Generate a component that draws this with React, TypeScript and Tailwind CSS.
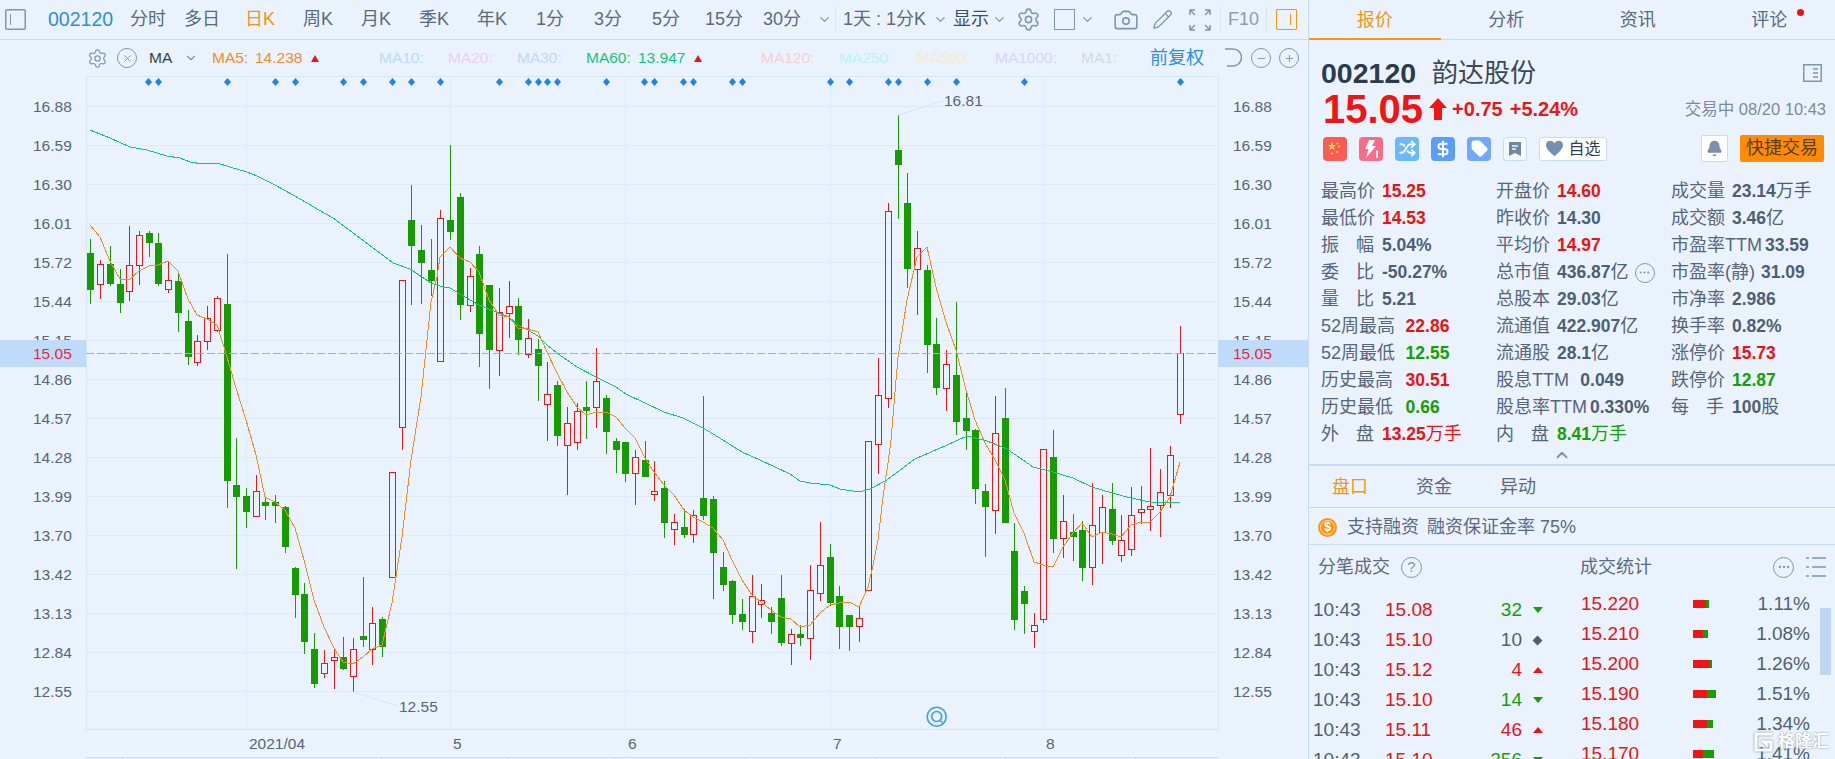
import { Bell, Camera, ChevronDown, ChevronUp, DollarSign, Ellipsis, Minus, Pencil, Plus, Settings, Shuffle, Tag, X } from "lucide-react";

const CODE_BLUE = "text-[#2a8cf0]";

// [x, high, bodyTop, bodyBottom, low, up?1:0]
const candles: number[][] = [
  [90, 239, 253, 290, 304, 0], [100, 260, 264, 284, 299, 1], [110, 246, 264, 284, 286, 0], [120, 269, 284, 303, 313, 0],
  [129, 226, 265, 291, 301, 1], [139, 231, 235, 265, 285, 1], [149, 231, 233, 243, 257, 0], [158, 233, 243, 284, 286, 0],
  [168, 261, 280, 289, 293, 1], [178, 272, 281, 313, 332, 0], [188, 310, 321, 357, 365, 0], [197, 335, 341, 362, 366, 1],
  [207, 306, 318, 341, 350, 1], [217, 296, 298, 330, 332, 1], [227, 254, 304, 481, 508, 0], [236, 438, 485, 497, 569, 0],
  [246, 488, 496, 512, 528, 0], [256, 475, 491, 516, 516, 1], [265, 497, 502, 506, 520, 0], [275, 495, 502, 506, 523, 0],
  [285, 506, 507, 547, 553, 0], [295, 567, 568, 595, 618, 0], [304, 583, 594, 642, 654, 0], [314, 633, 649, 684, 688, 0],
  [324, 650, 663, 673, 678, 1], [334, 648, 657, 660, 689, 1], [343, 637, 657, 669, 670, 0], [353, 638, 649, 676, 692, 1],
  [363, 577, 636, 640, 647, 0], [372, 607, 623, 649, 665, 1], [382, 617, 619, 647, 657, 0], [392, 472, 472, 577, 577, 1],
  [402, 280, 280, 427, 450, 1], [411, 185, 220, 246, 305, 0], [421, 225, 250, 263, 304, 0], [431, 239, 270, 281, 296, 0],
  [440, 210, 218, 361, 362, 1], [450, 145, 220, 232, 240, 0], [460, 193, 197, 305, 320, 0], [470, 268, 276, 305, 312, 1],
  [479, 246, 254, 334, 367, 0], [489, 285, 285, 350, 389, 0], [499, 288, 312, 350, 376, 1], [509, 281, 306, 313, 338, 1],
  [518, 298, 306, 340, 355, 0], [528, 319, 338, 354, 358, 1], [538, 339, 349, 366, 401, 0], [547, 362, 394, 404, 441, 1],
  [557, 381, 385, 436, 446, 0], [567, 407, 423, 445, 495, 1], [577, 403, 411, 442, 450, 1], [586, 381, 407, 411, 439, 0],
  [596, 348, 381, 407, 428, 1], [606, 395, 398, 432, 454, 0], [616, 438, 441, 450, 473, 0], [625, 442, 442, 474, 482, 0],
  [635, 450, 457, 473, 505, 1], [645, 441, 460, 477, 477, 0], [654, 461, 491, 494, 501, 1], [664, 481, 488, 523, 538, 0],
  [674, 514, 522, 529, 545, 1], [684, 509, 527, 535, 538, 0], [693, 510, 515, 534, 543, 1], [703, 396, 498, 516, 520, 0],
  [713, 496, 499, 553, 599, 0], [723, 552, 567, 585, 591, 0], [732, 580, 581, 615, 624, 0], [742, 599, 614, 622, 630, 0],
  [752, 575, 596, 631, 643, 1], [761, 584, 600, 604, 618, 1], [771, 607, 613, 622, 634, 0], [781, 575, 598, 643, 646, 0],
  [791, 629, 634, 643, 665, 1], [800, 625, 634, 638, 646, 0], [810, 565, 590, 638, 660, 1], [820, 522, 565, 593, 601, 1],
  [830, 544, 557, 603, 606, 0], [839, 586, 596, 627, 649, 0], [849, 615, 615, 627, 651, 0], [859, 607, 618, 626, 642, 1],
  [868, 441, 441, 590, 590, 1], [878, 358, 395, 444, 474, 1], [888, 203, 211, 398, 408, 1], [898, 115, 150, 165, 219, 0],
  [907, 173, 203, 269, 288, 0], [917, 231, 248, 269, 315, 1], [927, 265, 270, 345, 373, 0], [936, 318, 344, 388, 395, 0],
  [946, 350, 364, 388, 411, 1], [956, 302, 375, 422, 435, 0], [966, 391, 418, 431, 450, 0], [975, 429, 430, 489, 504, 0],
  [985, 484, 491, 507, 557, 0], [995, 396, 433, 510, 534, 1], [1005, 388, 418, 523, 523, 0], [1014, 523, 551, 620, 630, 0],
  [1024, 586, 591, 604, 634, 0], [1034, 613, 625, 631, 648, 1], [1043, 449, 449, 619, 623, 1], [1053, 430, 457, 539, 553, 0],
  [1063, 495, 521, 538, 558, 1], [1073, 514, 532, 537, 561, 0], [1082, 521, 530, 568, 581, 0], [1092, 483, 525, 567, 585, 1],
  [1102, 495, 507, 532, 564, 1], [1112, 483, 509, 541, 545, 0], [1121, 515, 540, 555, 562, 1], [1131, 487, 515, 549, 556, 1],
  [1141, 486, 509, 512, 524, 1], [1150, 448, 506, 509, 531, 1], [1160, 469, 492, 505, 537, 1], [1170, 446, 455, 495, 508, 1],
  [1180, 326, 353, 414, 424, 1],
];

const ma5 =
  "90,225 100,237 110,261 120,279 129,280 139,271 149,266 158,265 168,261 178,271 188,299 197,315 207,319 217,325 227,357 236,388 246,420 256,455 265,497 275,502 285,510 295,528 304,560 314,600 324,627 334,648 343,662 353,664 363,657 372,649 382,645 392,603 402,537 411,460 421,397 431,302 437,277 440,257 450,247 460,258 470,262 479,272 489,300 499,315 509,317 518,328 528,329 538,332 547,352 557,373 567,392 577,407 586,415 596,412 606,412 616,417 625,428 635,438 645,458 654,472 664,485 674,495 684,510 693,517 703,522 713,528 723,540 732,560 742,580 752,595 761,602 771,610 781,617 791,619 800,627 810,625 820,613 830,605 839,603 849,602 859,607 868,587 872,570 878,540 883,497 888,463 891,440 898,357 907,300 917,257 927,247 936,287 946,322 956,350 966,390 975,420 985,443 995,460 1005,480 1014,513 1024,533 1034,562 1043,565 1053,567 1063,547 1073,533 1082,523 1092,537 1102,532 1112,534 1121,537 1131,525 1141,522 1150,522 1160,512 1170,497 1180,462";
const ma60 =
  "90,130 110,138 130,147 147,150 167,156 180,158 190,162 203,164 217,163 230,167 247,172 257,176 275,185 293,195 333,218 360,238 393,263 410,269 431,283 443,287 450,288 460,294 479,305 499,313 509,317 518,325 528,330 538,336 547,345 557,353 577,367 596,377 616,387 626,394 645,403 664,412 683,418 703,428 723,440 742,452 760,460 790,474 800,481 810,483 830,485 840,489 859,492 870,489 887,480 915,459 947,445 967,436 987,441 1007,449 1033,467 1053,472 1073,478 1092,487 1112,493 1131,498 1150,502 1170,503 1180,502";

const axis = ["16.88", "16.59", "16.30", "16.01", "15.72", "15.44", "15.15", "14.86", "14.57", "14.28", "13.99", "13.70", "13.42", "13.13", "12.84", "12.55"];
const vLines = [246, 450, 625, 830, 1043];
const signals = [148, 158, 227, 275, 295, 343, 363, 392, 411, 440, 499, 528, 538, 547, 557, 606, 644, 654, 683, 693, 732, 742, 830, 849, 888, 898, 927, 956, 1024, 1180];
const bottomTicks = [122, 381, 508, 614, 745, 875, 1005, 1135];

type Stat = { label: string; value?: string; unit?: string; tone?: string; labelW?: number; spread?: boolean; more?: boolean };
const RED = "text-[#f01010]";
const GREEN = "text-[#14a000]";
const SLATE = "text-[#4e5e76]";

const stats: Stat[][] = [
  [
    { label: "最高价", value: "15.25", tone: RED },
    { label: "最低价", value: "14.53", tone: RED },
    { label: "振幅", value: "5.04%", spread: true },
    { label: "委比", value: "-50.27%", spread: true },
    { label: "量比", value: "5.21", spread: true },
    { label: "52周最高", value: "22.86", tone: RED, labelW: 84.6 },
    { label: "52周最低", value: "12.55", tone: GREEN, labelW: 84.6 },
    { label: "历史最高", value: "30.51", tone: RED, labelW: 84.6 },
    { label: "历史最低", value: "0.66", tone: GREEN, labelW: 84.6 },
    { label: "外盘", value: "13.25", unit: "万手", tone: RED, spread: true },
  ],
  [
    { label: "开盘价", value: "14.60", tone: RED },
    { label: "昨收价", value: "14.30" },
    { label: "平均价", value: "14.97", tone: RED },
    { label: "总市值", value: "436.87", unit: "亿", more: true },
    { label: "总股本", value: "29.03", unit: "亿" },
    { label: "流通值", value: "422.907", unit: "亿" },
    { label: "流通股", value: "28.1", unit: "亿" },
    { label: "股息TTM", value: "0.049", labelW: 84.3 },
    { label: "股息率TTM", value: "0.330%", labelW: 94 },
    { label: "内盘", value: "8.41", unit: "万手", tone: GREEN, spread: true },
  ],
  [
    { label: "成交量", value: "23.14", unit: "万手" },
    { label: "成交额", value: "3.46", unit: "亿" },
    { label: "市盈率TTM", value: "33.59", labelW: 94 },
    { label: "市盈率(静)", value: "31.09", labelW: 90 },
    { label: "市净率", value: "2.986" },
    { label: "换手率", value: "0.82%" },
    { label: "涨停价", value: "15.73", tone: RED },
    { label: "跌停价", value: "12.87", tone: GREEN },
    { label: "每手", value: "100", unit: "股", spread: true },
  ],
];

const ticks = [
  ["15.08", "32", "down"],
  ["15.10", "10", "flat"],
  ["15.12", "4", "up"],
  ["15.10", "14", "down"],
  ["15.11", "46", "up"],
  ["15.10", "256", "down"],
];

const levels: [string, number, number, string][] = [
  ["15.220", 13, 3, "1.11%"],
  ["15.210", 10, 5, "1.08%"],
  ["15.200", 17, 1.5, "1.26%"],
  ["15.190", 14, 9, "1.51%"],
  ["15.180", 14, 6, "1.34%"],
  ["15.170", 10, 11, "1.41%"],
];

function Chart() {
  return (
    <svg width={1308} height={683} viewBox="0 76 1308 683" className="block shrink-0">
      <rect x={0} y={340} width={86} height={27} fill="#bfdbfb" />
      <g stroke="#dcebfb" strokeWidth={1} shapeRendering="crispEdges">
        {axis.map((a, i) => (
          <line key={a} x1={86} x2={1218} y1={106.5 + 39 * i} y2={106.5 + 39 * i} />
        ))}
        {vLines.map((x) => (
          <line key={x} x1={x + 0.5} x2={x + 0.5} y1={76} y2={729} />
        ))}
        <rect x={86.5} y={76.5} width={1132} height={653} fill="none" stroke="#d6e7fa" />
      </g>
      <g stroke="#c6dcf5" shapeRendering="crispEdges">
        <line x1={86} x2={1218} y1={757.5} y2={757.5} />
        {bottomTicks.map((x) => (
          <line key={x} x1={x + 0.5} x2={x + 0.5} y1={757} y2={759} />
        ))}
      </g>

      {/* axis labels, the 15.15 row sits under the price band */}
      <g fontSize={15.5} fill="#55657c" dominantBaseline="central">
        {axis.map((a, i) => (
          <text key={a} x={33} y={106.5 + 39 * i}>{a}</text>
        ))}
        {axis.map((a, i) => (
          <text key={a} x={1233} y={106.5 + 39 * i}>{a}</text>
        ))}
      </g>
      <rect x={0} y={340} width={86} height={27} fill="#bfdbfb" />
      <rect x={1218} y={340} width={90} height={27} fill="#bfdbfb" />
      <g fontSize={15.5} fill="#f01f3f" dominantBaseline="central">
        <text x={33} y={353.5}>15.05</text>
        <text x={1233} y={353.5}>15.05</text>
      </g>

      <g fill="#1c84f0">
        {signals.map((x) => (
          <polygon key={x} points={`${x},78 ${x + 3.5},82 ${x},86 ${x - 3.5},82`} transform="translate(0.5 0)" />
        ))}
      </g>

      <g shapeRendering="crispEdges">
        {candles.map(([x, h, t, b, l, up]) =>
          up ? (
            <g key={x} stroke="#f01414" fill="none">
              <line x1={x + 0.5} x2={x + 0.5} y1={h} y2={t} />
              <line x1={x + 0.5} x2={x + 0.5} y1={b} y2={l} />
              <rect x={x - 2.5} y={t + 0.5} width={6} height={Math.max(b - t, 2)} />
            </g>
          ) : (
            <g key={x}>
              <line x1={x + 0.5} x2={x + 0.5} y1={h} y2={l} stroke="#169c00" />
              <rect x={x - 3} y={t} width={7} height={b - t} fill="#169c00" />
            </g>
          ),
        )}
      </g>

      <line x1={86} x2={1218} y1={353.5} y2={353.5} stroke="#f0a040" strokeDasharray="8 3" />
      <polyline points={ma60} fill="none" stroke="#14c47c" strokeWidth={1} shapeRendering="crispEdges" />
      <polyline points={ma5} fill="none" stroke="#fb8a1e" strokeWidth={1} shapeRendering="crispEdges" />

      <line x1={898} y1={115} x2={943} y2={101} stroke="#d5e5f5" />
      <line x1={353} y1={692} x2={398} y2={706} stroke="#d5e5f5" />
      <g fontSize={15.5} fill="#55657c" dominantBaseline="central">
        <text x={944} y={100.5}>16.81</text>
        <text x={399} y={706.5}>12.55</text>
        <text x={249} y={743}>2021/04</text>
        <text x={453} y={743}>5</text>
        <text x={628} y={743}>6</text>
        <text x={833} y={743}>7</text>
        <text x={1046} y={743}>8</text>
      </g>

      <g fill="none" stroke="#3b9bf5" strokeWidth={1.6}>
        <circle cx={936.7} cy={716.7} r={9.5} />
        <circle cx={936.7} cy={716.5} r={5} />
        <path d="M939.5 720l3 2.5" />
      </g>
    </svg>
  );
}

function Toolbar() {
  const periods = ["日K", "周K", "月K", "季K", "年K", "1分", "3分", "5分", "15分", "30分"];
  return (
    <div className="flex h-[40px] items-center border-b border-[#c6dcf5] pl-[5px] text-[18px] text-[#5a697f]">
      <svg width={21} height={21} viewBox="0 0 21 21" className="shrink-0">
        <rect x={0.75} y={0.75} width={19.5} height={19.5} rx={1} fill="none" stroke="#7c96b4" strokeWidth={1.5} />
        <line x1={5.5} x2={5.5} y1={5} y2={16} stroke="#7c96b4" />
      </svg>
      <span className={`ml-[22px] w-[66px] text-[19.5px] ${CODE_BLUE}`}>002120</span>
      <span className="ml-[16px] w-[36px]">分时</span>
      <span className="ml-[18px] w-[36px]">多日</span>
      <div className="ml-[11px] flex">
        {periods.map((p, i) => (
          <span key={p} className={`w-[58px] text-center ${i === 0 ? "text-[#f9900f]" : ""}`}>{p}</span>
        ))}
      </div>
      <ChevronDown size={15} className="ml-[6px] text-[#7c96b4]" />
      <div className="ml-[3px] h-[26px] w-px bg-[#d6e7fa]" />
      <span className="ml-[7px] w-[84px] whitespace-nowrap">1天 : 1分K</span>
      <ChevronDown size={15} className="ml-[6px] text-[#7c96b4]" />
      <span className="ml-[5px] w-[38px] text-[#3f4d62]">显示</span>
      <ChevronDown size={15} className="ml-[1px] text-[#7c96b4]" />
      <Settings size={25} strokeWidth={1.5} className="ml-[9px] text-[#7c96b4]" />
      <div className="ml-[13px] h-[21px] w-[21px] border-[1.5px] border-[#7c96b4]" />
      <ChevronDown size={15} className="ml-[5px] text-[#7c96b4]" />
      <Camera size={26} strokeWidth={1.5} className="ml-[18px] text-[#7c96b4]" />
      <Pencil size={21} strokeWidth={1.5} className="ml-[13px] text-[#7c96b4]" />
      <svg width={22} height={22} viewBox="0 0 22 22" fill="none" stroke="#7c96b4" strokeWidth={1.5} className="ml-[16px] shrink-0">
        <path d="M1 6V1h5M16 1h5v5M21 16v5h-5M6 21H1v-5M2 2l4 4M20 2l-4 4M20 20l-4-4M2 20l4-4" />
      </svg>
      <div className="ml-[9px] h-[26px] w-px bg-[#d6e7fa]" />
      <span className="ml-[7px] w-[32px] text-[18px] text-[#8a9db5]">F10</span>
      <div className="ml-[6px] h-[26px] w-px bg-[#d6e7fa]" />
      <div className="ml-[9px] flex h-[21px] w-[21px] items-center justify-end rounded-[1px] border-[1.5px] border-[#f9940f] pr-[5px]">
        <div className="h-[11px] w-[1.5px] bg-[#f9940f]" />
      </div>
    </div>
  );
}

function MaRow() {
  return (
    <div className="flex h-[36px] items-center whitespace-nowrap pl-[87px] text-[15.5px]">
      <Settings size={21} strokeWidth={1.4} className="shrink-0 text-[#7c96b4]" />
      <span className="ml-[9px] flex h-[20px] w-[20px] shrink-0 items-center justify-center rounded-full border-[1.5px] border-[#7c96b4]">
        <X size={11} className="text-[#7c96b4]" />
      </span>
      <span className="ml-[12px] w-[24px] text-[#333f50]">MA</span>
      <ChevronDown size={14} className="ml-[11px] shrink-0 text-[#7c96b4]" />
      <span className="ml-[14px] w-[36px] text-[#fb8a1e]">MA5:</span>
      <span className="ml-[7px] w-[48px] text-[#fb8a1e]">14.238</span>
      <span className="ml-[8px] h-0 w-0 border-x-[4.5px] border-b-[7px] border-x-transparent border-b-[#f01010]" />
      <span className="ml-[60px] w-[46px] text-[#b5dcf7]">MA10:</span>
      <span className="ml-[23px] w-[46px] text-[#eecdee]">MA20:</span>
      <span className="ml-[23px] w-[46px] text-[#bcd8fb]">MA30:</span>
      <span className="ml-[23px] w-[46px] text-[#10c878]">MA60:</span>
      <span className="ml-[6px] w-[48px] text-[#10c878]">13.947</span>
      <span className="ml-[8px] h-0 w-0 border-x-[4.5px] border-b-[7px] border-x-transparent border-b-[#f01010]" />
      <span className="ml-[59px] w-[55px] text-[#f6cfd5]">MA120:</span>
      <span className="ml-[23px] w-[55px] text-[#b5f5fb]">MA250:</span>
      <span className="ml-[23px] w-[55px] text-[#f8ecc8]">MA500:</span>
      <span className="ml-[23px] w-[63px] text-[#dcd2fb]">MA1000:</span>
      <span className="ml-[23px] w-[36px] text-[#d3dae0]">MA1:</span>
      <span className={`ml-[33px] w-[54px] text-[18px] ${CODE_BLUE}`}>前复权</span>
      <svg width={18} height={20} viewBox="0 0 18 20" fill="none" stroke="#7c96b4" strokeWidth={1.5} className="ml-[20px] shrink-0">
        <path d="M1 1h8a8 8 0 0 1 0 17H3" />
      </svg>
      <span className="ml-[9px] flex h-[20px] w-[20px] shrink-0 items-center justify-center rounded-full border-[1.5px] border-[#7c96b4]">
        <Minus size={11} className="text-[#7c96b4]" />
      </span>
      <span className="ml-[8px] flex h-[20px] w-[20px] shrink-0 items-center justify-center rounded-full border-[1.5px] border-[#7c96b4]">
        <Plus size={11} className="text-[#7c96b4]" />
      </span>
    </div>
  );
}

function StatRow({ s }: { s: Stat }) {
  const tone = s.tone ?? SLATE;
  return (
    <div className="flex h-[27px] items-center whitespace-nowrap">
      <div className="shrink-0 text-[#56657c]" style={{ width: s.labelW ?? 61 }}>
        {s.spread ? (
          <span className="flex w-[53px] justify-between">
            <span>{s.label[0]}</span>
            <span>{s.label[1]}</span>
          </span>
        ) : (
          s.label
        )}
      </div>
      <span className={`text-[17.5px] font-bold ${tone}`}>{s.value}</span>
      {s.unit && <span className={tone}>{s.unit}</span>}
      {s.more && (
        <span className="ml-[6px] flex h-[20px] w-[20px] items-center justify-center rounded-full border-[1.5px] border-[#7c96b4]">
          <Ellipsis size={13} className="text-[#7c96b4]" />
        </span>
      )}
    </div>
  );
}

function Badge({ bg, children }: { bg: string; children: React.ReactNode }) {
  return <span className={`flex h-[24px] w-[24px] shrink-0 items-center justify-center rounded-[4px] ${bg}`}>{children}</span>;
}

function QuotePanel() {
  return (
    <div className="relative h-[759px] flex-1 overflow-hidden border-l border-[#c6dcf5]">
      {/* tabs */}
      <div className="grid h-[40px] grid-cols-4 border-b border-[#c6dcf5] text-center text-[18px] leading-[40px] text-[#5a697f]">
        <div className="h-[40px] border-b-2 border-[#f9940f] text-[#f9940f]">报价</div>
        <div>分析</div>
        <div>资讯</div>
        <div>评论</div>
      </div>
      <div className="absolute left-[488px] top-[9px] h-[7px] w-[7px] rounded-full bg-[#f01010]" />

      {/* stock head */}
      <div className="pl-[12px] pr-[9px] pt-[16px]">
        <div className="flex h-[34px] items-center">
          <span className="text-[28.5px] font-bold text-[#2c3a4f]">002120</span>
          <span className="ml-[16px] text-[26px] text-[#3b4759]">韵达股份</span>
          <svg width={19} height={18} viewBox="0 0 19 18" fill="none" stroke="#7c96b4" strokeWidth={1.5} className="ml-auto mr-[4px] shrink-0">
            <rect x={0.75} y={0.75} width={17.5} height={16.5} />
            <path d="M10 5h5M10 9h5M10 13h5" />
          </svg>
        </div>
        <div className="mt-[1px] flex h-[36px] items-center text-[#f01414]">
          <span className="ml-[2px] text-[40px] font-bold leading-none">15.05</span>
          <svg width={18} height={22} viewBox="0 0 18 22" fill="#f01414" className="ml-[6px] shrink-0">
            <path d="M9 0l9 10h-5v12H5V10H0z" />
          </svg>
          <span className="ml-[5px] text-[20px] font-bold">+0.75</span>
          <span className="ml-[7px] text-[20px] font-bold">+5.24%</span>
          <span className="ml-auto text-[16.5px] text-[#7a8aa0]">交易中 08/20 10:43</span>
        </div>
        <div className="mt-[8px] flex h-[27px] items-center gap-[12px] pl-[2px]">
          <Badge bg="bg-[#f75c55]">
            <svg width={16} height={16} viewBox="0 0 16 16" fill="#ffd84a">
              <path d="M5 1l1.2 3H9L6.8 6l.9 3L5 7.2 2.3 9l.9-3L1 4h2.8z" />
              <circle cx={10.5} cy={2.5} r={1} />
              <circle cx={12} cy={5.5} r={1} />
              <circle cx={5} cy={12.5} r={1} />
              <circle cx={10} cy={11} r={1} />
            </svg>
          </Badge>
          <Badge bg="bg-[#fb6a87]">
            <svg width={22} height={22} viewBox="0 0 22 22" fill="#fff">
              <path d="M9 2h6l-3 6h4L6 20l2.5-9H5z" />
              <path d="M16 13l2-1v8h-2z" />
            </svg>
          </Badge>
          <Badge bg="bg-[#6ab8ff]">
            <Shuffle size={17} strokeWidth={2.6} className="text-white" />
          </Badge>
          <Badge bg="bg-[#5b9dfb]">
            <DollarSign size={18} strokeWidth={2.6} className="text-white" />
          </Badge>
          <Badge bg="bg-[#6ea9fb]">
            <Tag size={17} strokeWidth={2.4} fill="#fff" className="text-white" />
          </Badge>
          <span className="flex h-[24px] w-[24px] shrink-0 items-center justify-center rounded-[3px] border border-[#c6dcf5] bg-white/40">
            <svg width={14} height={16} viewBox="0 0 14 16">
              <path d="M1 1h12v14l-6-3-6 3z" fill="#71879f" />
              <path d="M4 5h6M4 8h4" stroke="#eef5fd" strokeWidth={1.4} />
            </svg>
          </span>
          <span className="flex h-[24px] w-[68px] shrink-0 items-center justify-center gap-[4px] rounded-[3px] border border-[#c6dcf5] bg-white text-[16px] text-[#333f50]">
            <svg width={19} height={17} viewBox="0 0 24 22" fill="#7290b0">
              <path d="M12 21C5 15 1 11 1 6.500 1 3 3.600 1 6.500 1 9 1 11 2.400 12 4.500 13 2.400 15 1 17.500 1 20.400 1 23 3 23 6.500 23 11 19 15 12 21z" />
            </svg>
            自选
          </span>
          <span className="ml-auto flex h-[27px] w-[27px] shrink-0 items-center justify-center rounded-[2px] border border-[#c6dcf5] bg-white">
            <Bell size={17} fill="#7a90ac" className="text-[#7a90ac]" />
          </span>
          <span className="mr-[2px] flex h-[27px] w-[84px] shrink-0 items-center justify-center rounded-[2px] bg-[#ff8c00] text-[18px] text-[#5a3a10]">快捷交易</span>
        </div>
      </div>

      {/* stats */}
      <div className="mt-[16px] grid grid-cols-[175px_175px_1fr] pl-[12px] text-[18px]">
        {stats.map((col, i) => (
          <div key={i}>
            {col.map((s) => (
              <StatRow key={s.label} s={s} />
            ))}
          </div>
        ))}
      </div>
      <div className="flex h-[18px] items-start justify-center border-b-[2px] border-[#c6dcf5] pr-[20px]">
        <ChevronUp size={18} strokeWidth={2.6} className="-mt-[2px] text-[#7c96b4]" />
      </div>

      {/* sub tabs */}
      <div className="flex h-[42px] items-center border-b border-[#c6dcf5] pl-[23px] pt-[2px] text-[18px] text-[#5a697f]">
        <span className="w-[84px] text-[#f9940f]">盘口</span>
        <span className="w-[84px]">资金</span>
        <span>异动</span>
      </div>
      <div className="flex h-[37px] items-center border-b border-[#c6dcf5] pl-[9px] pt-[2px] text-[18px] text-[#5a697f]">
        <span className="flex h-[19px] w-[19px] items-center justify-center rounded-full bg-[#ff9510]">
          <span className="flex h-[15px] w-[15px] items-center justify-center rounded-full border border-white/70 text-[12px] font-bold leading-none text-white">$</span>
        </span>
        <span className="ml-[10px]">支持融资</span>
        <span className="ml-[8px]">融资保证金率 75%</span>
      </div>

      {/* trades */}
      <div className="flex text-[19px]">
        <div className="w-[271px] shrink-0">
          <div className="flex h-[42px] items-center pl-[9px] pt-[2px] text-[18px] text-[#5a697f]">
            <span>分笔成交</span>
            <span className="ml-[11px] flex h-[21px] w-[21px] items-center justify-center rounded-full border-[1.5px] border-[#7c96b4] text-[15px] text-[#7c96b4]">?</span>
          </div>
          <div className="pt-[8px]">
            {ticks.map(([price, vol, dir], i) => (
              <div key={i} className="flex h-[30px] items-center pl-[4px]">
                <span className="w-[72px] text-[#4e5e76]">10:43</span>
                <span className="text-[#f01010]">{price}</span>
                <span className={`ml-auto w-[60px] text-right ${dir === "up" ? "text-[#f01010]" : dir === "down" ? GREEN : "text-[#4e5e76]"}`}>{vol}</span>
                <span className="ml-[10px] mr-[37px] flex w-[11px] justify-center">
                  {dir === "up" && <span className="h-0 w-0 border-x-[5.5px] border-b-[6px] border-x-transparent border-b-[#f01010]" />}
                  {dir === "down" && <span className="h-0 w-0 border-x-[5.5px] border-t-[6px] border-x-transparent border-t-[#14a000]" />}
                  {dir === "flat" && <span className="h-[7px] w-[7px] rotate-45 bg-[#4e5e76]" />}
                </span>
              </div>
            ))}
          </div>
        </div>
        <div className="flex-1">
          <div className="flex h-[42px] items-center pr-[9px] pt-[2px] text-[18px] text-[#5a697f]">
            <span>成交统计</span>
            <span className="ml-auto flex h-[21px] w-[21px] items-center justify-center rounded-full border-[1.5px] border-[#7c96b4]">
              <Ellipsis size={14} className="text-[#7c96b4]" />
            </span>
            <svg width={20} height={20} viewBox="0 0 20 20" stroke="#7c96b4" strokeWidth={1.4} className="ml-[12px] shrink-0">
              <path d="M0 1h3M6 1h14M0 10h3M6 10h14M0 19h3M6 19h14" />
            </svg>
          </div>
          <div className="pt-[2px]">
            {levels.map(([price, r, g, pct]) => (
              <div key={price} className="flex h-[30px] items-center pl-[1px]">
                <span className="w-[112px] text-[#f01010]">{price}</span>
                <span className="flex h-[8px] w-[50px]">
                  <span className="bg-[#f01414]" style={{ width: r }} />
                  <span className="bg-[#14a000]" style={{ width: g }} />
                </span>
                <span className="w-[67px] text-right text-[#4e5e76]">{pct}</span>
              </div>
            ))}
          </div>
        </div>
      </div>

      {/* scrollbar and watermark lie over the list */}
      <div className="absolute left-[511px] top-[608px] h-[67px] w-[11px] bg-[#bcd6f3]" />
      <div className="absolute left-[444px] top-[729px] flex items-center gap-[4px] text-[17px] font-bold text-white [text-shadow:0_0_2px_rgba(90,100,120,0.8)]">
        <svg width={21} height={20} viewBox="0 0 21 20" fill="none" stroke="#fff" strokeWidth={3} className="drop-shadow-[0_0_1px_rgba(90,100,120,0.8)]">
          <path d="M19 2H3v16h15v-8h-7l4 4" />
        </svg>
        格隆汇
      </div>
    </div>
  );
}

export default function App() {
  return (
    <div className="flex h-[759px] w-[1835px] overflow-hidden bg-[#eaf3fd] font-['Liberation_Sans','Noto_Sans_CJK_SC',sans-serif]">
      <div className="w-[1308px] shrink-0">
        <Toolbar />
        <MaRow />
        <Chart />
      </div>
      <QuotePanel />
    </div>
  );
}
